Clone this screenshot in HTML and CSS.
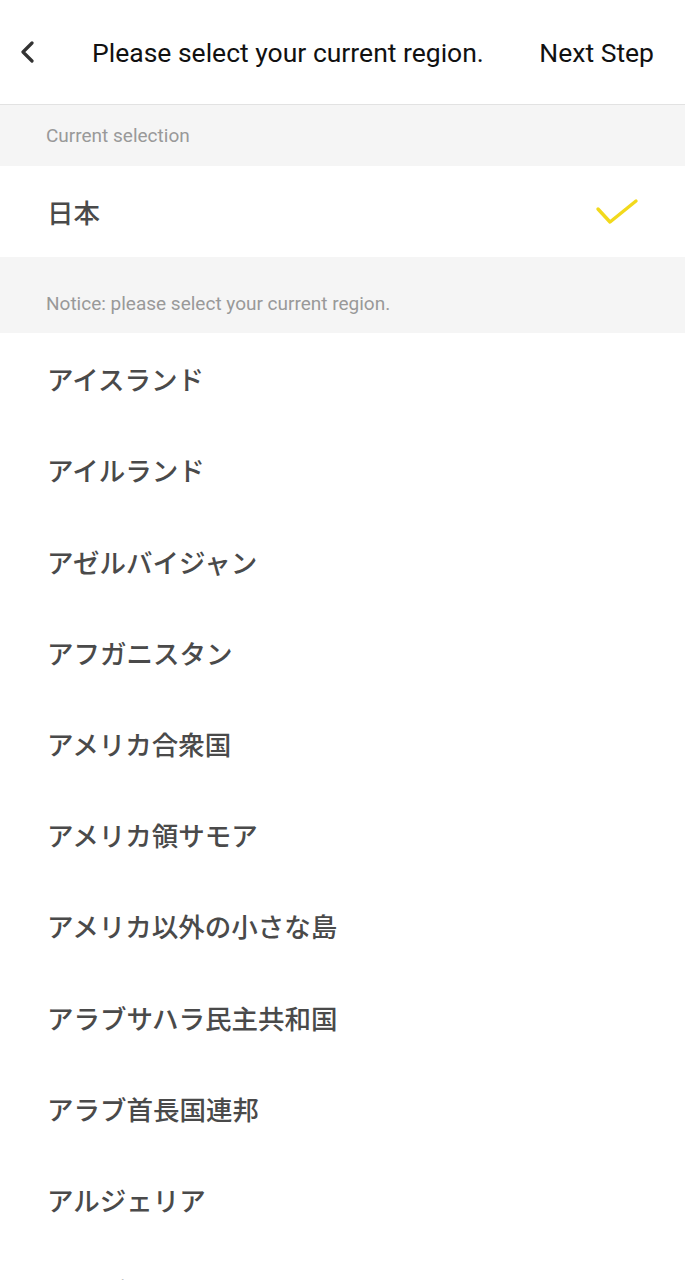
FILE: index.html
```html
<!DOCTYPE html>
<html lang="ja">

<head>
    <meta charset="UTF-8">
    <meta name="viewport" content="width=device-width, initial-scale=1.0">
    <title>Region</title>
    <link rel="stylesheet" href="styles.css">
</head>

<body>

    <header class="top-bar">
        <span class="back">
            <svg width="16" height="22" viewBox="0 0 16 22">
                <path d="M13 2 L4 11 L13 20" fill="none" stroke="#333" stroke-width="3.2" stroke-linecap="round" stroke-linejoin="round" />
            </svg>
        </span>
        <span class="title">Please select your current region.</span>
        <span class="next">Next Step</span>
    </header>

    <div class="section-label">Current selection</div>
    <div class="region-row selected">
        <span>日本</span>
        <svg class="check" width="44" height="30" viewBox="0 0 44 30">
            <path d="M3 12 L15 25 L41 4" fill="none" stroke="#f2d91c" stroke-width="3.4" stroke-linecap="round" stroke-linejoin="round" />
        </svg>
    </div>

    <div class="section-label notice">Notice: please select your current region.</div>

    <ul class="region-list">
        <li class="region-row">アイスランド</li>
        <li class="region-row">アイルランド</li>
        <li class="region-row">アゼルバイジャン</li>
        <li class="region-row">アフガニスタン</li>
        <li class="region-row">アメリカ合衆国</li>
        <li class="region-row">アメリカ領サモア</li>
        <li class="region-row">アメリカ以外の小さな島</li>
        <li class="region-row">アラブサハラ民主共和国</li>
        <li class="region-row">アラブ首長国連邦</li>
        <li class="region-row">アルジェリア</li>
        <li class="region-row">アルゼンチン</li>
    </ul>

</body>

</html>
```

FILE: styles.css
```css
body {
    margin: 0;
    font-family: Roboto, "Noto Sans CJK JP", sans-serif;
    background-color: #fff;
    overflow: hidden;
}

/* Top navigation bar */

.top-bar {
    display: flex;
    align-items: center;
    height: 105px;
    padding: 0 31px 0 19px;
    border-bottom: 1px solid #e2e2e2;
    box-sizing: border-box;
    color: #111;
    font-size: 26.5px;
}

.back {
    display: flex;
    width: 73px;
}

.title {
    flex: 1;
}

.next {
    white-space: nowrap;
}

/* Gray section labels */

.section-label {
    display: flex;
    align-items: center;
    height: 61px;
    padding-left: 46px;
    background-color: #f5f5f5;
    color: #999;
    font-size: 19px;
}

.section-label.notice {
    height: 76px;
    align-items: flex-end;
    padding-bottom: 18px;
    box-sizing: border-box;
}

/* Region rows */

.region-list {
    list-style: none;
    margin: 0;
    padding: 0;
}

.region-row {
    display: flex;
    align-items: center;
    justify-content: space-between;
    height: 91.2px;
    padding: 0 46px 0 47px;
    color: #4a4a4a;
    font-family: "Noto Sans CJK JP", sans-serif;
    font-size: 26.5px;
    font-weight: 500;
}
```
